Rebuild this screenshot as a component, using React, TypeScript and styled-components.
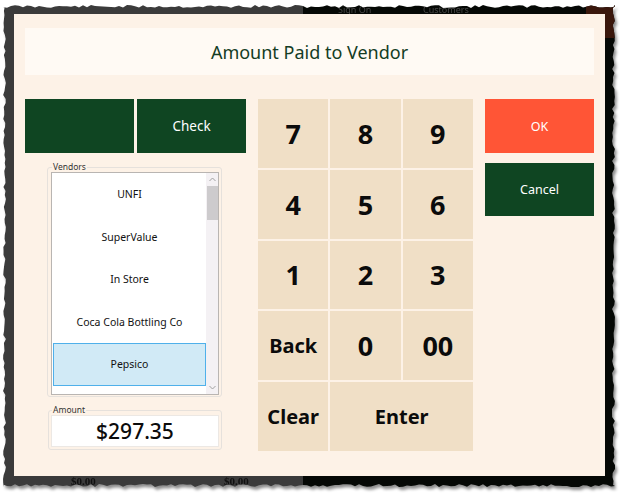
import styled, { createGlobalStyle } from "styled-components";

const GlobalStyle = createGlobalStyle`
  body {
    margin: 0;
    background: #ffffff;
    font-family: "Noto Sans", "Open Sans", sans-serif;
  }
`;

const FRAME_W = 612;
const FRAME_H = 482;

// jagged "torn paper" outline for the screenshot frame
function tornPolygon() {
  let seed = 11;
  const rnd = () => {
    seed = (seed * 9301 + 49297) % 233280;
    return seed / 233280;
  };
  const pts: string[] = [];
  const amp = 3;
  for (let x = 0; x <= FRAME_W; x += 4) pts.push(`${x}px ${rnd() * amp}px`);
  for (let y = 0; y <= FRAME_H; y += 4) pts.push(`${FRAME_W - rnd() * amp}px ${y}px`);
  for (let x = FRAME_W; x >= 0; x -= 4) pts.push(`${x}px ${FRAME_H - rnd() * amp}px`);
  for (let y = FRAME_H; y >= 0; y -= 4) pts.push(`${rnd() * amp}px ${y}px`);
  return `polygon(${pts.join(",")})`;
}

const vendors = ["UNFI", "SuperValue", "In Store", "Coca Cola Bottling Co", "Pepsico"];

const keys: { label: string; small?: boolean; span?: number }[] = [
  { label: "7" }, { label: "8" }, { label: "9" },
  { label: "4" }, { label: "5" }, { label: "6" },
  { label: "1" }, { label: "2" }, { label: "3" },
  { label: "Back", small: true }, { label: "0" }, { label: "00" },
  { label: "Clear", small: true }, { label: "Enter", small: true, span: 2 },
];

export default function App() {
  return (
    <>
      <GlobalStyle />
      <Page>
        <Shadow>
          <Frame style={{ clipPath: tornPolygon() }}>
            <BackText className="sign">Sign On</BackText>
            <BackText className="cust">Customers</BackText>
            <CornerBlock />
            <BackText className="zero1">$0.00</BackText>
            <BackText className="zero2">$0.00</BackText>
            <Dialog>
              <Header>Amount Paid to Vendor</Header>
              <Body>
                <LeftCol>
                  <TenderRow>
                    <GreenButton />
                    <GreenButton>Check</GreenButton>
                  </TenderRow>
                  <VendorGroup>
                    <legend>Vendors</legend>
                    <ListBox>
                      <Items>
                        {vendors.map((v) => (
                          <Item key={v} $selected={v === "Pepsico"}>
                            {v}
                          </Item>
                        ))}
                      </Items>
                      <ScrollBar>
                        <Arrow>
                          <svg width="7" height="5" viewBox="0 0 7 5">
                            <path d="M0.5 4 L3.5 1 L6.5 4" fill="none" stroke="#a0a0a0" strokeWidth="1" />
                          </svg>
                        </Arrow>
                        <Thumb />
                        <Track />
                        <Arrow>
                          <svg width="7" height="5" viewBox="0 0 7 5">
                            <path d="M0.5 1 L3.5 4 L6.5 1" fill="none" stroke="#a0a0a0" strokeWidth="1" />
                          </svg>
                        </Arrow>
                      </ScrollBar>
                    </ListBox>
                  </VendorGroup>
                  <AmountGroup>
                    <legend>Amount</legend>
                    <AmountBox>$297.35</AmountBox>
                  </AmountGroup>
                </LeftCol>
                <Keypad>
                  {keys.map((k) => (
                    <Key key={k.label} $small={k.small} $span={k.span}>
                      {k.label}
                    </Key>
                  ))}
                </Keypad>
                <RightCol>
                  <OkButton>OK</OkButton>
                  <CancelButton>Cancel</CancelButton>
                </RightCol>
              </Body>
            </Dialog>
          </Frame>
        </Shadow>
      </Page>
    </>
  );
}

const Page = styled.div`
  width: 627px;
  height: 498px;
  padding: 5px 0 0 3px;
  box-sizing: border-box;
  overflow: hidden;
`;

const Shadow = styled.div`
  width: ${FRAME_W}px;
  filter: drop-shadow(2px 3px 1.5px rgba(0, 0, 0, 0.45));
`;

const Frame = styled.div`
  position: relative;
  width: ${FRAME_W}px;
  height: ${FRAME_H}px;
  box-sizing: border-box;
  padding: 9px 10px 11px 11px;
  background: linear-gradient(to right, #3b3b3b 0 49%, #050805 49%);
`;

const BackText = styled.div`
  position: absolute;
  font-family: "Noto Sans", sans-serif;
  color: #474747;
  font-size: 9px;
  line-height: 9px;
  &.sign { left: 335px; top: 0px; }
  &.cust { left: 420px; top: 0px; }
  &.zero1, &.zero2 {
    font-family: "Liberation Serif", serif;
    font-weight: bold;
    font-size: 11px;
    line-height: 10px;
    color: #111;
    top: 471px;
  }
  &.zero1 { left: 68px; }
  &.zero2 { left: 221px; }
`;

const CornerBlock = styled.div`
  position: absolute;
  right: 0;
  top: 0;
  width: 29px;
  height: 33px;
  background: #3a170c;
`;

const Dialog = styled.div`
  position: relative;
  width: 591px;
  height: 462px;
  box-sizing: border-box;
  padding: 14px 11px;
  background: #fdf2e7;
`;

const Header = styled.div`
  height: 47px;
  background: #fffaf4;
  display: flex;
  align-items: center;
  justify-content: center;
  color: #143d24;
  font-size: 18px;
`;

const Body = styled.div`
  margin-top: 24px;
  display: grid;
  grid-template-columns: 221px 215px 109px;
  column-gap: 12px;
  align-items: start;
`;

const LeftCol = styled.div`
  display: flex;
  flex-direction: column;
`;

const TenderRow = styled.div`
  display: grid;
  grid-template-columns: 109px 109px;
  column-gap: 3px;
  height: 54px;
`;

const GreenButton = styled.div`
  background: #0f4522;
  color: #ffffff;
  font-size: 13.5px;
  display: flex;
  align-items: center;
  justify-content: center;
`;

const Group = styled.fieldset`
  margin: 0 0 0 22px;
  width: 175px;
  box-sizing: border-box;
  border: 1px solid #e6e1dc;
  border-radius: 3px;
  padding: 0 2px 2px 3px;
  legend {
    font-size: 8.5px;
    line-height: 10px;
    color: #333;
    padding: 0 1px;
    margin-left: 1px;
  }
`;

const VendorGroup = styled(Group)`
  margin-top: 9px;
  height: 235px;
`;

const AmountGroup = styled(Group)`
  margin-top: 8px;
  margin-left: 23px;
  width: 174px;
  height: 45px;
  padding: 0 2px 2px 2px;
`;

const ListBox = styled.div`
  height: 223px;
  border: 1px solid #b9b5b2;
  background: #ffffff;
  display: flex;
  box-sizing: border-box;
`;

const Items = styled.div`
  flex: 1;
  padding: 0 0 0 1px;
  overflow: hidden;
`;

const Item = styled.div<{ $selected?: boolean }>`
  height: 42.5px;
  box-sizing: border-box;
  display: flex;
  align-items: center;
  justify-content: center;
  font-size: 10.5px;
  color: #111;
  background: ${(p) => (p.$selected ? "#d1eaf6" : "transparent")};
  border: 1px solid ${(p) => (p.$selected ? "#4fb0ea" : "transparent")};
`;

const ScrollBar = styled.div`
  width: 12px;
  background: #f4f1f4;
  display: flex;
  flex-direction: column;
  align-items: center;
`;

const Arrow = styled.div`
  height: 13px;
  display: flex;
  align-items: center;
  justify-content: center;
`;

const Thumb = styled.div`
  width: 11px;
  height: 34px;
  background: #cdcbcd;
`;

const Track = styled.div`
  flex: 1;
`;

const AmountBox = styled.div`
  height: 32px;
  background: #ffffff;
  border: 1px solid #ece8e4;
  box-sizing: border-box;
  display: flex;
  align-items: center;
  justify-content: center;
  font-size: 21px;
  font-weight: 500;
  color: #0b0b0b;
`;

const Keypad = styled.div`
  display: grid;
  grid-template-columns: repeat(3, 1fr);
  grid-template-rows: repeat(5, 68.8px);
  gap: 2px;
`;

const Key = styled.div<{ $small?: boolean; $span?: number }>`
  grid-column: span ${(p) => p.$span ?? 1};
  background: #f0dfc6;
  display: flex;
  align-items: center;
  justify-content: center;
  font-weight: bold;
  color: #0b0b0b;
  font-size: ${(p) => (p.$small ? "20px" : "27px")};
`;

const RightCol = styled.div`
  display: flex;
  flex-direction: column;
  gap: 10px;
`;

const OkButton = styled.div`
  height: 54px;
  background: #ff5536;
  color: #ffffff;
  font-size: 12.5px;
  display: flex;
  align-items: center;
  justify-content: center;
`;

const CancelButton = styled(OkButton)`
  height: 53px;
  background: #0f4522;
`;
